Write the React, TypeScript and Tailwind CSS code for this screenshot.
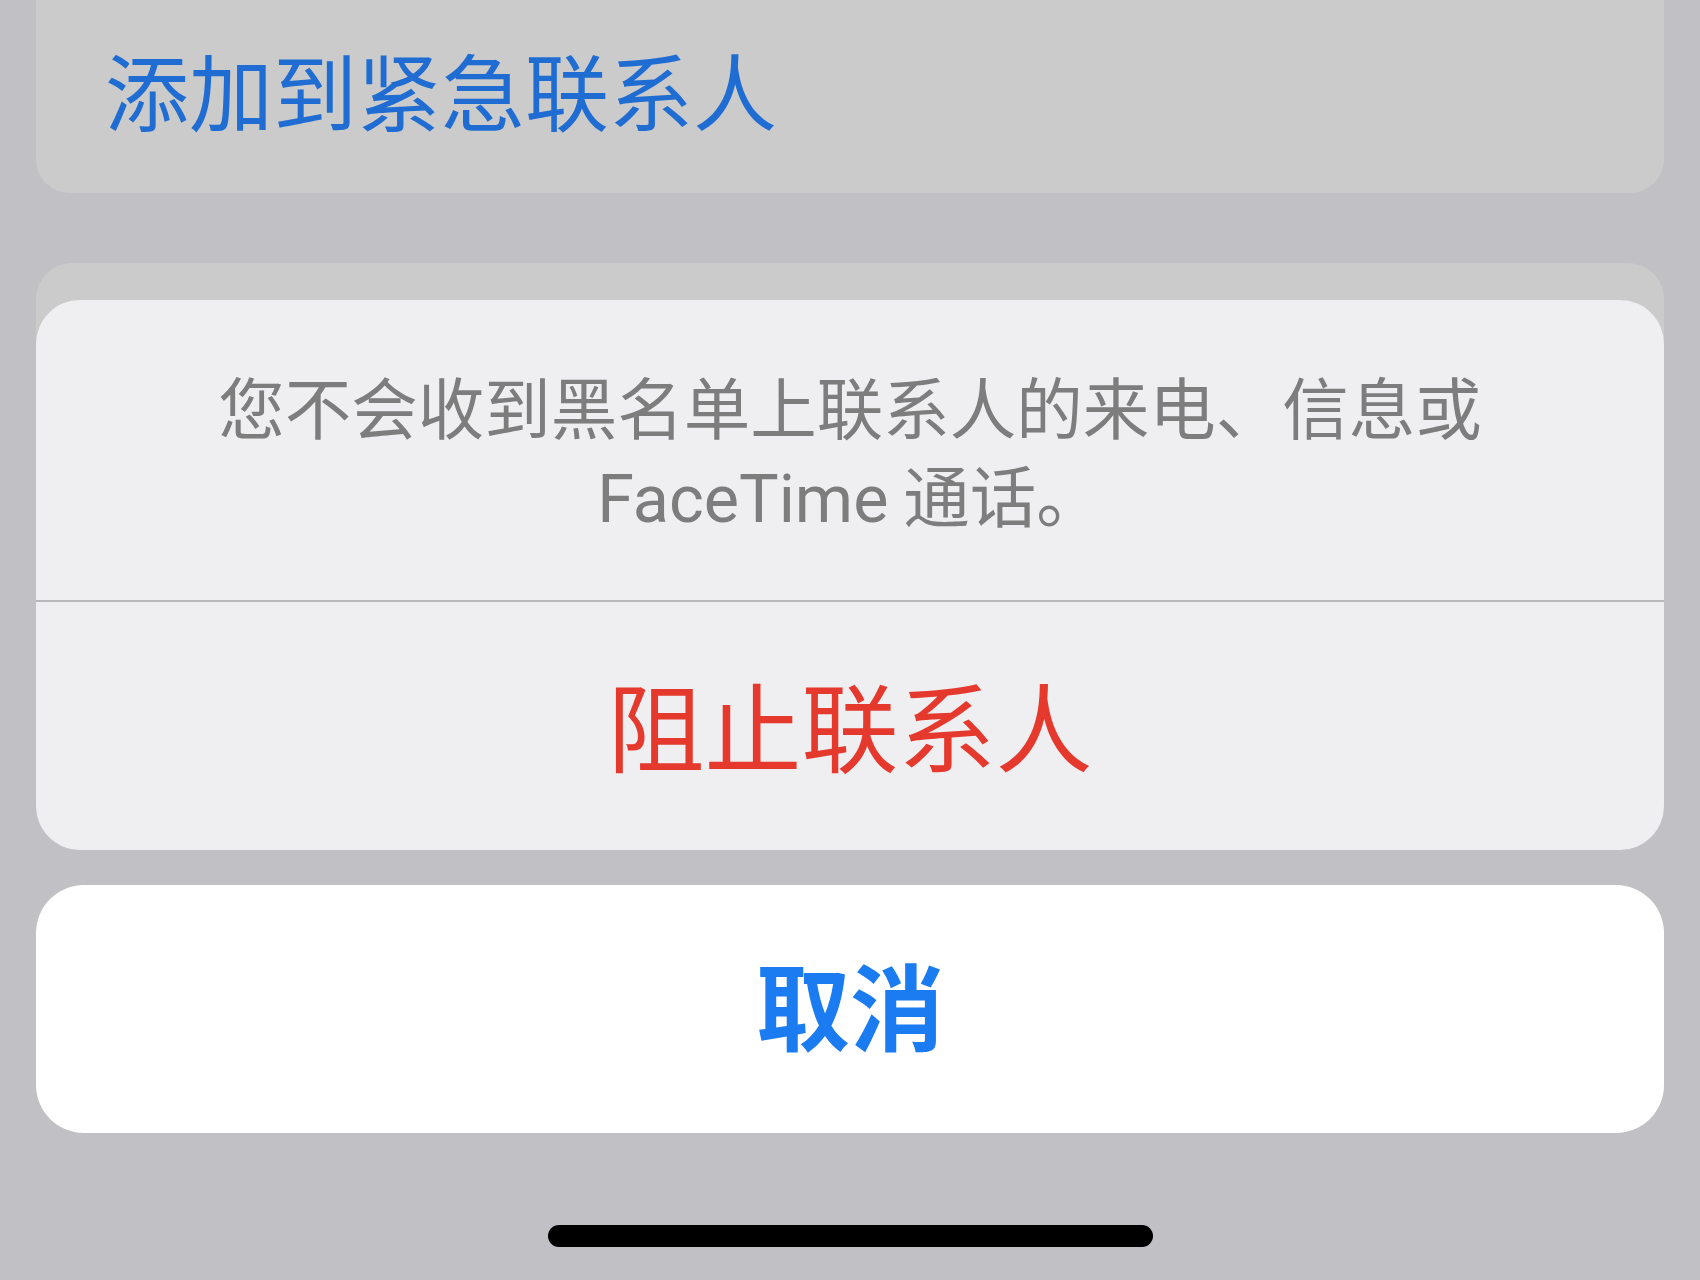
import React from "react";

export default function App() {
  const font = { fontFamily: '"Noto Sans CJK SC", "Noto Sans", sans-serif' };
  return (
    <div
      className="w-[1700px] h-[1280px] bg-[#c1c0c5] overflow-hidden flex flex-col px-[36px]"
      style={font}
    >
      {/* top card (cut off at top) */}
      <div className="h-[193px] shrink-0 bg-[#cbcbcb] rounded-b-[34px] flex items-center pl-[69px] pb-[16px]">
        <span className="text-[84px] leading-none text-[#1f6dd2]">添加到紧急联系人</span>
      </div>

      {/* second card peeking behind the sheet */}
      <div className="mt-[70px] h-[120px] shrink-0 bg-[#cbcbcb] rounded-t-[36px]" />

      {/* action sheet */}
      <div className="-mt-[83px] relative shrink-0 bg-[#efeef0] rounded-[44px] overflow-hidden flex flex-col">
        <div className="h-[300px] flex flex-col items-center justify-center pt-[4px] text-[#7d7d7d] text-[66.5px] leading-[88px] text-center">
          <div>您不会收到黑名单上联系人的来电、信息或</div>
          <div>
            <span className="font-['Roboto','Noto_Sans_CJK_SC',sans-serif]">FaceTime</span> 通话。
          </div>
        </div>
        <div className="h-[2px] bg-[#b8b8ba]" />
        <div className="h-[248px] flex items-center justify-center pb-[8px]">
          <span className="text-[97px] leading-none text-[#e5392e]">阻止联系人</span>
        </div>
      </div>

      {/* cancel */}
      <div className="mt-[35px] h-[248px] shrink-0 bg-white rounded-[48px] flex items-center justify-center pb-[12px]">
        <span className="text-[94px] leading-none font-bold text-[#1b7cf1]">取消</span>
      </div>

      {/* home indicator */}
      <div className="mt-[92px] flex justify-center">
        <div className="w-[605px] h-[22px] rounded-full bg-black" />
      </div>
    </div>
  );
}
